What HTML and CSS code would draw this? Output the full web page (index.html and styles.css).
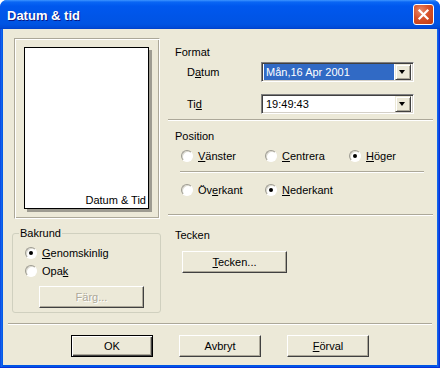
FILE: index.html
```html
<!DOCTYPE html>
<html lang="sv">
<head>
  <meta charset="UTF-8" />
  <title>Datum &amp; tid</title>
  <link rel="stylesheet" href="styles.css">
</head>
<body>
  <div class="window">
    <div class="titlebar">
      <span class="title">Datum &amp; tid</span>
      <span class="close">
        <svg width="19" height="19" viewBox="0 0 19 19">
          <path d="M5.5 5.5 L13.5 13.5 M13.5 5.5 L5.5 13.5" stroke="#fff" stroke-width="2.2" stroke-linecap="square"/>
        </svg>
      </span>
    </div>

    <div class="client">
      <div class="main">
        <div class="left-col">
          <div class="preview">
            <div class="page"><span class="page-label">Datum &amp; Tid</span></div>
          </div>

          <fieldset class="group">
            <legend>Bakrund</legend>
            <label class="radio checked first"><span class="dot"></span><span><u>G</u>enomskinlig</span></label>
            <label class="radio"><span class="dot"></span><span>Opa<u>k</u></span></label>
            <button class="btn color-btn" disabled>Färg...</button>
          </fieldset>
        </div>

        <div class="right-col">
          <div class="section format">
            <div class="sec-title">Format</div>
            <div class="field-row">
              <span class="field-label">D<u>a</u>tum</span>
              <div class="combo">
                <span class="combo-value selected">Mån,16 Apr 2001</span>
                <span class="combo-arrow"></span>
              </div>
            </div>
            <div class="field-row">
              <span class="field-label">Ti<u>d</u></span>
              <div class="combo">
                <span class="combo-value">19:49:43</span>
                <span class="combo-arrow"></span>
              </div>
            </div>
          </div>

          <div class="section position">
            <div class="sec-title">Position</div>
            <div class="radio-row">
              <label class="radio"><span class="dot"></span><span><u>V</u>änster</span></label>
              <label class="radio"><span class="dot"></span><span><u>C</u>entrera</span></label>
              <label class="radio checked"><span class="dot"></span><span><u>H</u>öger</span></label>
            </div>
            <div class="inner-sep"></div>
            <div class="radio-row">
              <label class="radio"><span class="dot"></span><span>Öv<u>e</u>rkant</span></label>
              <label class="radio checked"><span class="dot"></span><span><u>N</u>ederkant</span></label>
            </div>
          </div>

          <div class="section tecken">
            <div class="sec-title">Tecken</div>
            <button class="btn font-btn"><u>T</u>ecken...</button>
          </div>
        </div>
      </div>

      <div class="footer">
        <button class="btn default">OK</button>
        <button class="btn">Avbryt</button>
        <button class="btn"><u>F</u>örval</button>
      </div>
    </div>
  </div>
</body>
</html>
```

FILE: styles.css
```css
* {
  box-sizing: border-box;
  margin: 0;
  padding: 0;
}

body {
  width: 440px;
  height: 368px;
  overflow: hidden;
  background: #fff;
  font-family: "Liberation Sans", Arial, sans-serif;
  font-size: 11px;
  line-height: 13px;
  color: #000;
}

u {
  text-decoration: underline;
  text-underline-offset: 1px;
}

/* window frame */
.window {
  width: 440px;
  height: 368px;
  display: flex;
  flex-direction: column;
  background: linear-gradient(to right, #0831d9 0, #166aee 1px, #0055e5 3px, #0055e5 436px, #166aee 438px, #0831d9 439px);
  border-radius: 7px 7px 0 0;
  border-bottom: 1px solid #0831d9;
}

.titlebar {
  height: 29px;
  display: flex;
  align-items: center;
  justify-content: space-between;
  padding: 0 6px 0 7px;
  border-radius: 7px 7px 0 0;
  background: linear-gradient(#3d95ff 0, #0a66f4 2px, #0058ee 6px, #0055e8 16px, #0054e3 24px, #0049d6 28px, #003dc4 29px);
}

.title {
  color: #fff;
  font-weight: bold;
  font-size: 13px;
  text-shadow: 1px 1px 0 #0a1883;
  padding-top: 1px;
}

.close {
  width: 21px;
  height: 21px;
  display: flex;
  align-items: center;
  justify-content: center;
  border: 1px solid #fff;
  border-radius: 3px;
  background: radial-gradient(circle at 35% 30%, #e88a6a 0, #d6512a 45%, #c03a10 100%);
}

.client {
  flex: 1;
  display: flex;
  flex-direction: column;
  margin: 0 3px 2px 3px;
  background: #ece9d8;
}

.main {
  height: 294px;
  display: flex;
}

/* left column */
.left-col {
  width: 149px;
  margin-left: 9px;
  padding-top: 9px;
}

.preview {
  width: 146px;
  height: 181px;
  margin-left: 2px;
  padding: 8px 0 0 9px;
  border: 1px solid;
  border-color: #aca899 #fff #fff #aca899;
  box-shadow: inset 1px 1px 0 #fff, inset -1px -1px 0 #aca899;
}

.page {
  width: 125px;
  height: 162px;
  display: flex;
  align-items: flex-end;
  justify-content: flex-end;
  padding: 0 2px 1px 0;
  background: #fff;
  border: 1px solid #000;
  box-shadow: 3px 3px 0 #9d9b91;
}

.group {
  margin-top: 8px;
  width: 149px;
  height: 86px;
  padding: 0 0 0 6px;
  border: 1px solid #d0d0bf;
  border-radius: 3px;
}

.group legend {
  padding: 0 1px;
}

.group .radio {
  margin-left: 6px;
}

.group .radio.first {
  margin-top: 5px;
}

.color-btn {
  width: 105px;
  margin: 5px 0 0 20px;
}

/* radio buttons */
.radio {
  height: 16px;
  display: flex;
  align-items: center;
  gap: 5px;
  margin-bottom: 2px;
}

.dot {
  position: relative;
  width: 12px;
  height: 12px;
  border-radius: 50%;
  background: #fff;
  border: 1px solid;
  border-color: #9d9b91 #fff #fff #9d9b91;
  box-shadow: inset 1px 1px 0 #dcdad0;
}

.radio.checked .dot::after {
  content: "";
  position: absolute;
  left: 3px;
  top: 3px;
  width: 4px;
  height: 4px;
  border-radius: 50%;
  background: #000;
}

/* right column */
.right-col {
  flex: 1;
  margin: 0 5px 0 7px;
}

.section {
  border-bottom: 1px solid #aca899;
  box-shadow: 0 1px 0 #fff;
  padding-left: 7px;
}

.format {
  height: 91px;
  padding-top: 17px;
}

.field-row {
  display: flex;
  align-items: center;
  margin-top: 3px;
  padding-left: 12px;
}

.field-row + .field-row {
  margin-top: 12px;
}

.field-label {
  width: 74px;
}

.combo {
  width: 153px;
  height: 20px;
  display: flex;
  align-items: center;
  padding: 2px;
  background: #fff;
  border: 1px solid;
  border-color: #808080 #fff #fff #808080;
  box-shadow: inset 1px 1px 0 #404040, inset -1px -1px 0 #d4d0c8;
}

.combo-value {
  flex: 1;
  height: 16px;
  line-height: 16px;
  padding-left: 2px;
  margin-right: 1px;
}

.combo-value.selected {
  background: #316ac5;
  color: #fff;
}

.combo-arrow {
  position: relative;
  width: 16px;
  height: 16px;
  background: #ece9d8;
  border: 1px solid;
  border-color: #ece9d8 #404040 #404040 #ece9d8;
  box-shadow: inset 1px 1px 0 #fff, inset -1px -1px 0 #aca899;
}

.combo-arrow::after {
  content: "";
  position: absolute;
  left: 3px;
  top: 5px;
  border-style: solid;
  border-width: 4px 3.5px 0 3.5px;
  border-color: #000 transparent transparent transparent;
}

.position {
  height: 95px;
  padding-top: 10px;
}

.radio-row {
  display: grid;
  grid-template-columns: 84px 84px 84px;
  margin: 5px 0 0 6px;
}

.inner-sep {
  margin: 5px 9px 10px 5px;
  border-top: 1px solid #aca899;
  box-shadow: 0 1px 0 #fff;
}

.tecken {
  border-bottom: none;
  box-shadow: none;
  padding-top: 14px;
}

.font-btn {
  width: 105px;
  margin: 9px 0 0 7px;
}

/* buttons */
.btn {
  height: 22px;
  font-family: inherit;
  font-size: 11px;
  color: #000;
  background: #ece9d8;
  border: 1px solid;
  border-color: #fff #404040 #404040 #fff;
  box-shadow: inset -1px -1px 0 #aca899;
}

.btn:disabled {
  color: #aca899;
  text-shadow: 1px 1px 0 #fff;
}

.btn.default {
  border-color: #000;
  box-shadow: inset 1px 1px 0 #fff, inset -1px -1px 0 #404040, inset -2px -2px 0 #aca899;
}

.footer {
  flex: 1;
  display: flex;
  gap: 26px;
  margin: 0 5px;
  padding: 11px 0 0 63px;
  border-top: 1px solid #aca899;
  box-shadow: inset 0 1px 0 #fff;
}

.footer .btn {
  width: 82px;
}
```
